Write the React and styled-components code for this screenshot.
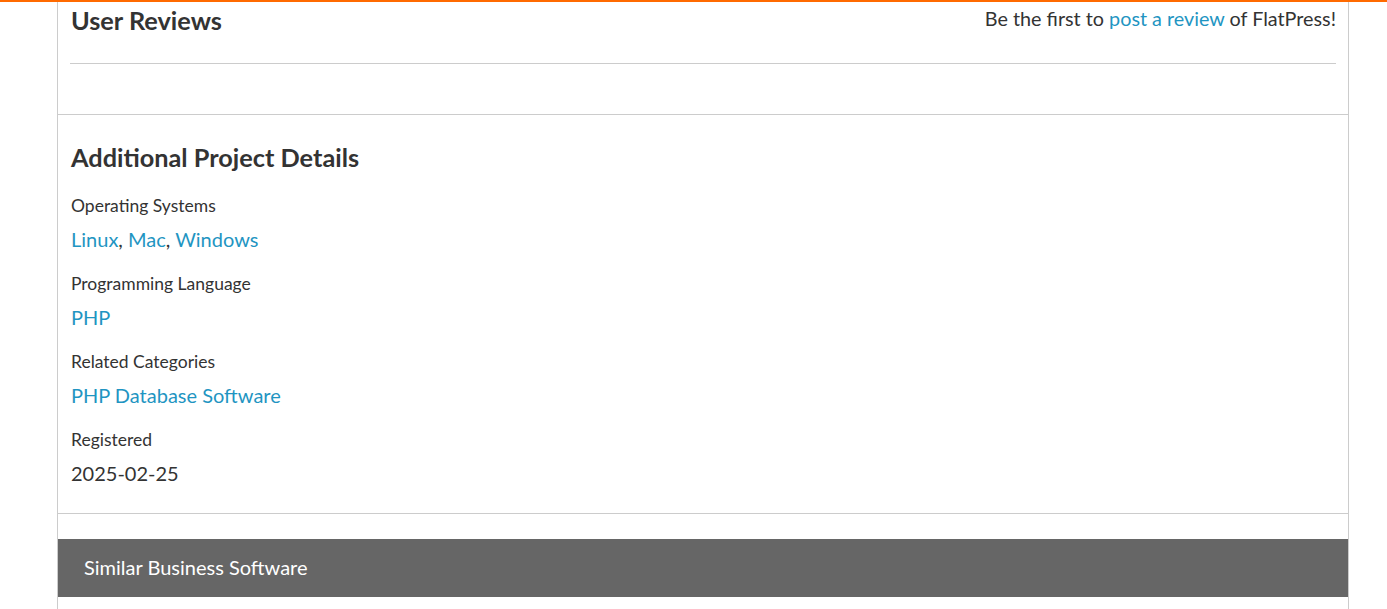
import styled, { createGlobalStyle } from "styled-components";

const GlobalStyle = createGlobalStyle`
  body {
    margin: 0;
    background: #ffffff;
    font-family: Lato, "Open Sans", sans-serif;
    color: #333333;
  }
`;

const details = [
  { label: "Operating Systems", links: ["Linux", "Mac", "Windows"] },
  { label: "Programming Language", links: ["PHP"] },
  { label: "Related Categories", links: ["PHP Database Software"] },
  { label: "Registered", text: "2025-02-25" },
];

const App = () => {
  return (
    <>
      <GlobalStyle />
      <TopBar />
      <Page>
        <ReviewsSection>
          <ReviewsHeader>
            <Heading>User Reviews</Heading>
            <ReviewPrompt>
              Be the first to <Link href="#">post a review</Link> of FlatPress!
            </ReviewPrompt>
          </ReviewsHeader>
          <Rule />
        </ReviewsSection>

        <DetailsSection>
          <Heading>Additional Project Details</Heading>
          <DetailList>
            {details.map((item) => (
              <DetailItem key={item.label}>
                <Label>{item.label}</Label>
                <Value>
                  {item.links
                    ? item.links.map((name, i) => (
                        <span key={name}>
                          {i > 0 && ", "}
                          <Link href="#">{name}</Link>
                        </span>
                      ))
                    : item.text}
                </Value>
              </DetailItem>
            ))}
          </DetailList>
        </DetailsSection>

        <SimilarBar>Similar Business Software</SimilarBar>
        <Spacer />
      </Page>
    </>
  );
};

export default App;

const TopBar = styled.div`
  height: 2px;
  background-color: #ff6a00;
`;

const Page = styled.div`
  margin-left: 57px;
  width: 1290px;
  border-left: 1px solid #cccccc;
  border-right: 1px solid #cccccc;
`;

const ReviewsSection = styled.section`
  padding: 4px 12px 50px 12px;
  border-bottom: 1px solid #cccccc;
`;

const ReviewsHeader = styled.div`
  display: flex;
  justify-content: space-between;
  align-items: flex-start;
  padding-left: 1px;
`;

const Heading = styled.h2`
  margin: 0;
  font-size: 25.3px;
  line-height: 29px;
  font-weight: 700;
  color: #333333;
`;

const ReviewPrompt = styled.p`
  margin: 1px 0 0;
  font-size: 19.8px;
  line-height: 23px;
`;

const Link = styled.a`
  color: #1f95c2;
  text-decoration: none;
`;

const Rule = styled.hr`
  margin: 28px 0 0;
  border: none;
  border-top: 1px solid #cccccc;
  height: 0;
`;

const DetailsSection = styled.section`
  padding: 28px 13px 26px 13px;
  border-bottom: 1px solid #cccccc;
`;

const DetailList = styled.dl`
  margin: 22px 0 0;
  display: flex;
  flex-direction: column;
  gap: 19px;
`;

const DetailItem = styled.div`
  display: flex;
  flex-direction: column;
  gap: 7px;
`;

const Label = styled.dt`
  font-size: 17.5px;
  line-height: 24px;
`;

const Value = styled.dd`
  margin: 0;
  font-size: 20px;
  line-height: 28px;
`;

const SimilarBar = styled.h3`
  margin: 25px 0 0;
  height: 58px;
  padding: 0 26px 2px;
  box-sizing: border-box;
  display: flex;
  align-items: center;
  background-color: #666666;
  color: #ffffff;
  font-size: 20px;
  font-weight: 400;
`;

const Spacer = styled.div`
  height: 40px;
`;
